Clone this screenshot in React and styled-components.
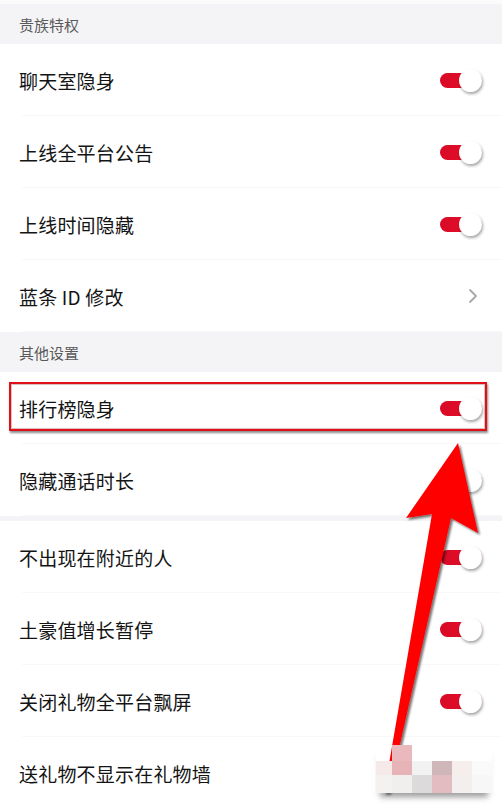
import React from 'react';
import styled, { createGlobalStyle } from 'styled-components';

const GlobalStyle = createGlobalStyle`
  html, body {
    margin: 0;
    padding: 0;
    background: #ffffff;
  }
  body {
    font-family: "Noto Sans CJK SC", "Noto Sans", sans-serif;
  }
`;

const sections = [
  {
    title: '贵族特权',
    items: [
      { label: '聊天室隐身', type: 'switch' },
      { label: '上线全平台公告', type: 'switch' },
      { label: '上线时间隐藏', type: 'switch' },
      { label: '蓝条 ID 修改', type: 'link' },
    ],
  },
  {
    title: '其他设置',
    items: [
      { label: '排行榜隐身', type: 'switch', highlight: true },
      { label: '隐藏通话时长', type: 'switch', breakAfter: true },
      { label: '不出现在附近的人', type: 'switch' },
      { label: '土豪值增长暂停', type: 'switch' },
      { label: '关闭礼物全平台飘屏', type: 'switch' },
      { label: '送礼物不显示在礼物墙', type: 'switch' },
    ],
  },
];

const mosaic = [
  ['transparent', '#eab9bd', 'transparent', 'transparent', 'transparent', 'transparent'],
  ['#f6e9ea', '#e6b3b7', '#f2f2f2', '#ceb6b9', '#f6eded', '#fafafa'],
  ['#f4f1f1', '#f1eeee', '#dcdada', '#e2bcc1', '#f3efef', '#f7f7f7'],
];

export default function App() {
  return (
    <>
      <GlobalStyle />
      <Page>
        {sections.map((section) => (
          <Section key={section.title}>
            <SectionHeader>{section.title}</SectionHeader>
            {section.items.map((item) => (
              <React.Fragment key={item.label}>
                <Row>
                  <Label>{item.label}</Label>
                  {item.type === 'switch' ? (
                    <Switch>
                      <Knob />
                    </Switch>
                  ) : (
                    <Chevron viewBox="0 0 10 16">
                      <polyline points="2,2 8,8 2,14" />
                    </Chevron>
                  )}
                  {item.highlight && <Highlight />}
                </Row>
                {item.breakAfter && <Gap />}
              </React.Fragment>
            ))}
          </Section>
        ))}

        <Arrow viewBox="0 0 502 804">
          <defs>
            <filter id="arrowShadow" x="-20%" y="-20%" width="140%" height="140%">
              <feDropShadow dx="2" dy="2" stdDeviation="1.2" floodColor="#000" floodOpacity="0.55" />
            </filter>
          </defs>
          <polygon
            points="458,443 478,533 451,518 389,793 384,793 432,514 406,518"
            fill="#ff0000"
            filter="url(#arrowShadow)"
          />
        </Arrow>

        <Mosaic>
          {mosaic.map((line, r) =>
            line.map((color, c) => <Cell key={`${r}-${c}`} $color={color} />)
          )}
        </Mosaic>
      </Page>
    </>
  );
}

/******************** styled components ************************/

const Page = styled.div`
  position: relative;
  width: 502px;
  height: 804px;
  overflow: hidden;
  padding-top: 4px;
  box-sizing: border-box;
  background: #fbfbfb;
`;

const Section = styled.div`
  display: flex;
  flex-direction: column;
  background: #ffffff;
`;

const SectionHeader = styled.div`
  height: 40px;
  display: flex;
  align-items: center;
  padding: 0 19px;
  background: #f4f4f6;
  color: #5a5a5a;
  font-size: 15px;
`;

const Row = styled.div`
  position: relative;
  height: 72px;
  display: flex;
  align-items: center;
  justify-content: space-between;
  padding: 0 20px 0 19px;
  background: #ffffff;
  box-sizing: border-box;

  &::after {
    content: '';
    position: absolute;
    left: 22px;
    right: 0;
    bottom: 0;
    height: 1px;
    background: #f8f8f8;
  }
`;

const Label = styled.span`
  font-size: 19px;
  color: #141414;
  letter-spacing: 0.2px;
`;

const Switch = styled.div`
  width: 42px;
  height: 15px;
  border-radius: 8px;
  background: linear-gradient(90deg, #d80a26, #e8112c);
  display: flex;
  align-items: center;
  justify-content: flex-end;
`;

const Knob = styled.div`
  flex-shrink: 0;
  width: 23px;
  height: 23px;
  border-radius: 50%;
  background: #ffffff;
  box-shadow: 1px 2px 3px rgba(0, 0, 0, 0.35);
`;

const Chevron = styled.svg`
  width: 10px;
  height: 16px;
  margin-right: 4px;
  fill: none;
  stroke: #a8a8a8;
  stroke-width: 1.8;
  stroke-linecap: round;
  stroke-linejoin: round;
`;

const Highlight = styled.div`
  position: absolute;
  left: 9px;
  right: 15px;
  top: 10px;
  height: 49px;
  border: 2px solid #e0101a;
  box-sizing: border-box;
  box-shadow: 1px 2px 2px rgba(0, 0, 0, 0.45), inset 0 0 0 1px rgba(120, 0, 0, 0.25);
  pointer-events: none;
  z-index: 1;
`;

const Gap = styled.div`
  height: 5px;
  background: #f4f4f6;
`;

const Arrow = styled.svg`
  position: absolute;
  left: 0;
  top: 0;
  width: 502px;
  height: 804px;
  pointer-events: none;
  z-index: 2;
`;

const Mosaic = styled.div`
  position: absolute;
  left: 376px;
  top: 745px;
  display: grid;
  grid-template-columns: 16px repeat(5, 20px);
  grid-template-rows: 16px 14px 18px;
  filter: blur(0.6px);
  box-shadow: 0 8px 6px -4px rgba(90, 90, 90, 0.6);
  pointer-events: none;
  z-index: 3;
`;

const Cell = styled.div`
  background: ${({ $color }) => $color};
`;
